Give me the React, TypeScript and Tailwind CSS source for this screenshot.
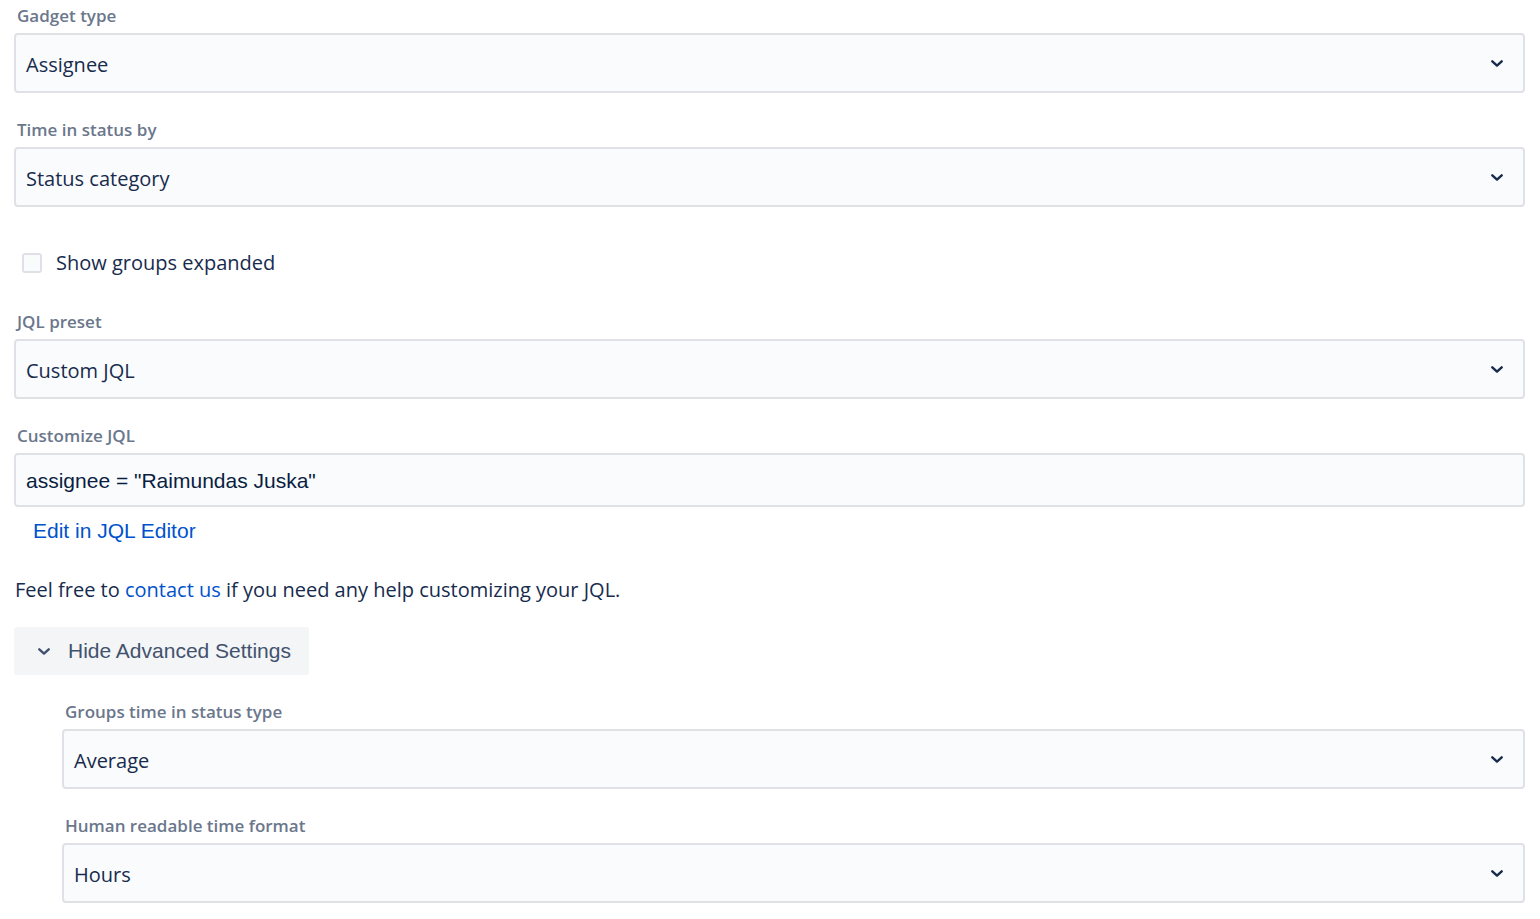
import React from "react";

const ui = "font-['Segoe_UI','Open_Sans','Noto_Sans',sans-serif]";
const arial = "font-['Liberation_Sans',Arial,sans-serif]";

function Chevron({ className = "" }: { className?: string }) {
  return (
    <svg width="12" height="7" viewBox="0 0 12 7" className={className} aria-hidden>
      <path d="M1.3 1.3 6 5.6l4.7-4.3" fill="none" stroke="currentColor" strokeWidth="2.4" strokeLinecap="round" strokeLinejoin="round" />
    </svg>
  );
}

function Label({ children }: { children: React.ReactNode }) {
  return (
    <div className={`${ui} h-6 mb-[5px] pl-[3px] text-[17px] leading-6 font-semibold text-[#6b778c]`}>
      {children}
    </div>
  );
}

function Select({ label, value }: { label: string; value: string }) {
  return (
    <div>
      <Label>{label}</Label>
      <div className="h-[60px] flex items-center justify-between rounded-[4px] border-2 border-[#dfe1e6] bg-[#fafbfc] pl-[10px] pr-5">
        <span className={`${ui} pt-[3px] text-[20px] text-[#172b4d]`}>{value}</span>
        <Chevron className="text-[#172b4d]" />
      </div>
    </div>
  );
}

export default function App() {
  return (
    <div className="bg-white min-h-screen pl-[14px] pr-[15px] pt-1">
      <Select label="Gadget type" value="Assignee" />
      <div className="mt-[25px]">
        <Select label="Time in status by" value="Status category" />
      </div>

      {/* Checkbox */}
      <label className="mt-11 h-6 flex items-center gap-[14px] pl-2">
        <span className="w-5 h-5 rounded-[3px] border-2 border-[#dfe1e6] bg-[#fafbfc]" />
        <span className={`${ui} text-[20px] text-[#172b4d]`}>Show groups expanded</span>
      </label>

      <div className="mt-[35px]">
        <Select label="JQL preset" value="Custom JQL" />
      </div>

      <div className="mt-[25px]">
        <Label>Customize JQL</Label>
        <div className="h-[54px] flex items-center rounded-[4px] border-2 border-[#dfe1e6] bg-[#fafbfc] pl-[10px]">
          <span className={`${arial} pt-px text-[21px] text-[#091e42]`}>assignee = "Raimundas Juska"</span>
        </div>
      </div>

      <div className={`${arial} mt-3 pl-[19px] h-6 leading-6 text-[21px] text-[#0052cc]`}>
        Edit in JQL Editor
      </div>

      <p className={`${ui} mt-[35px] pl-px h-6 leading-6 text-[20px] text-[#172b4d]`}>
        Feel free to <a className="text-[#0052cc]">contact us</a> if you need any help customizing your JQL.
      </p>

      <button className="mt-[25px] h-12 w-[295px] flex items-center rounded-[3px] bg-[#f4f5f7] pl-6 gap-[18px]">
        <Chevron className="text-[#42526e]" />
        <span className={`${arial} text-[21px] text-[#42526e]`}>Hide Advanced Settings</span>
      </button>

      <div className="pl-12">
        <div className="mt-[25px]">
          <Select label="Groups time in status type" value="Average" />
        </div>
        <div className="mt-[25px]">
          <Select label="Human readable time format" value="Hours" />
        </div>
      </div>
    </div>
  );
}
